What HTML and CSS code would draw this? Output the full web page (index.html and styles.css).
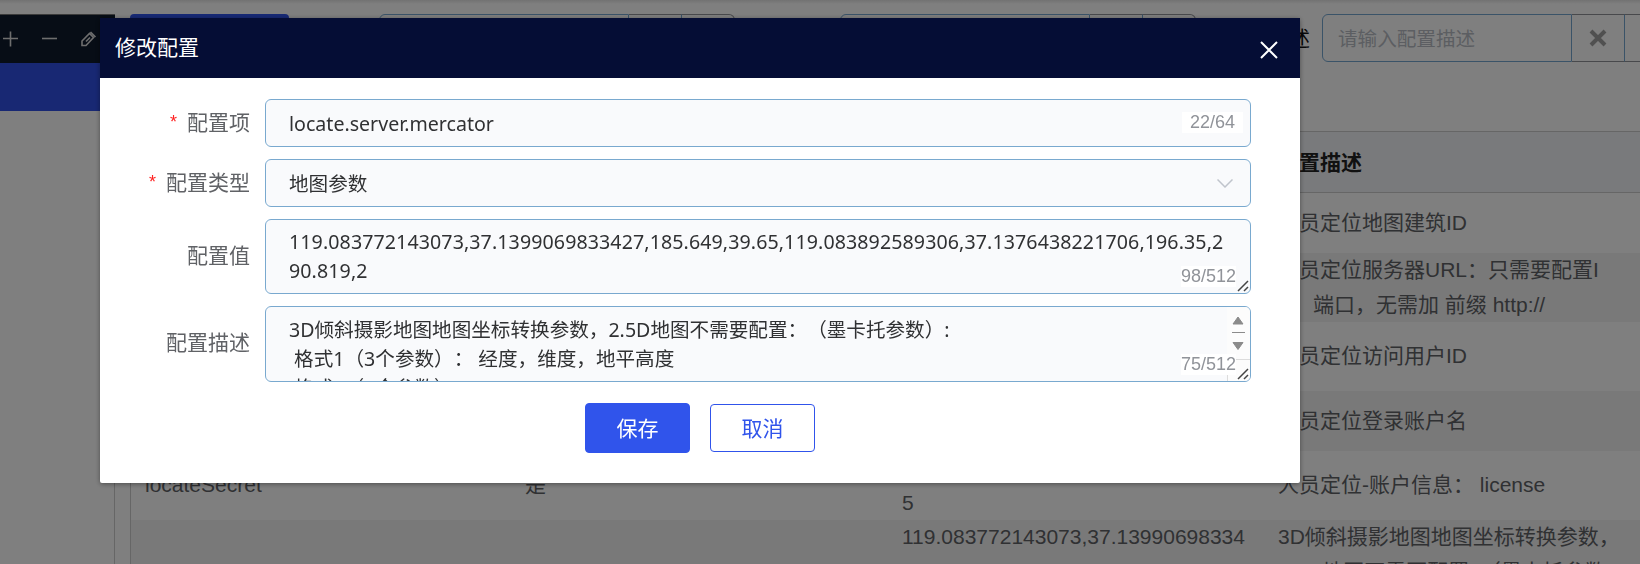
FILE: index.html
```html
<!DOCTYPE html>
<html lang="zh-CN">
  <head>
    <meta charset="UTF-8" />
    <meta name="viewport" content="width=device-width, initial-scale=1.0" />
    <title>修改配置</title>
    <link rel="stylesheet" href="styles.css">
  </head>
  <body>
    <div class="page">
      <!-- Sidebar -->
      <aside class="sidebar">
        <div class="sidebar-tools">
          <svg width="16" height="16" viewBox="0 0 16 16"><path d="M7.5 0.5V15.5M0 7.5H15" /></svg>
          <svg width="16" height="16" viewBox="0 0 16 16"><path d="M0 7.5H15" /></svg>
          <svg width="16" height="16" viewBox="0 0 16 16"><path d="M1 14.5V10L8.5 2.5L12.5 6.5L5 14.5ZM5 10.5L9 6.5M9.5 1L14.5 6" /></svg>
        </div>
        <div class="sidebar-active"></div>
      </aside>

      <main class="content">
        <!-- Search bar -->
        <div class="search">
          <button class="search-btn"></button>
          <div class="search-item first">
            <label>配置项</label>
            <div class="search-input"></div>
            <div class="search-clear"></div>
            <div class="search-more"></div>
          </div>
          <div class="search-item">
            <label>配置值</label>
            <div class="search-input"></div>
            <div class="search-clear"></div>
            <div class="search-more"></div>
          </div>
          <div class="search-item">
            <label>配置描述</label>
            <div class="search-input">请输入配置描述</div>
            <div class="search-clear">
              <svg width="18" height="18" viewBox="0 0 18 18"><path d="M2 2L16 16M16 2L2 16" /></svg>
            </div>
            <div class="search-more"></div>
          </div>
        </div>

        <!-- Config table -->
        <table class="config-table">
          <thead>
            <tr><th>配置项</th><th>是否启用</th><th>配置值</th><th>配置描述</th></tr>
          </thead>
          <tbody>
            <tr><td></td><td></td><td></td><td>人员定位地图建筑ID</td></tr>
            <tr class="tall"><td></td><td></td><td></td><td>人员定位服务器URL：只需要配置I<br>P、端口，无需加 前缀 http://</td></tr>
            <tr class="tall"><td></td><td></td><td></td><td>人员定位访问用户ID</td></tr>
            <tr><td></td><td></td><td></td><td>人员定位登录账户名</td></tr>
            <tr class="tall"><td>locateSecret</td><td>是</td><td><br>5</td><td>人员定位-账户信息： license</td></tr>
            <tr class="tall"><td></td><td></td><td>119.083772143073,37.13990698334<br>&nbsp;</td><td>3D倾斜摄影地图地图坐标转换参数，<br>2.5D地图不需要配置：（墨卡托参数</td></tr>
          </tbody>
        </table>
      </main>
    </div>

    <div class="mask"></div>

    <!-- Edit dialog -->
    <div class="dialog">
      <div class="dialog-header">
        <span>修改配置</span>
        <svg width="18" height="18" viewBox="0 0 18 18"><path d="M1 1L17 17M17 1L1 17" /></svg>
      </div>
      <div class="dialog-body">
        <div class="form-item">
          <label class="required">配置项</label>
          <div class="field">
            <span>locate.server.mercator</span>
            <span class="count">22/64</span>
          </div>
        </div>
        <div class="form-item">
          <label class="required">配置类型</label>
          <div class="field">
            <span class="selected">地图参数</span>
            <svg class="arrow" width="16" height="9" viewBox="0 0 16 9"><path d="M0.5 0.5L8 8L15.5 0.5" /></svg>
          </div>
        </div>
        <div class="form-item area-item">
          <label>配置值</label>
          <div class="field area value">119.083772143073,37.1399069833427,185.649,39.65,119.083892589306,37.1376438221706,196.35,2<br>90.819,2
            <span class="area-count">98/512</span>
            <svg class="resizer" width="12" height="12" viewBox="0 0 12 12"><path d="M1 11L11 1M7 11L11 7" /></svg>
          </div>
        </div>
        <div class="form-item area-item">
          <label>配置描述</label>
          <div class="field area desc">3D倾斜摄影地图地图坐标转换参数，2.5D地图不需要配置：（墨卡托参数）:<br>&nbsp;格式1（3个参数）：&nbsp;经度，维度，地平高度<br>&nbsp;格式2（8个参数）：
            <div class="scrollbar">
              <svg width="24" height="52" viewBox="0 0 24 52">
                <path class="thumb" d="M6 17L11 10L16 17ZM6 35.5L11 42.5L16 35.5Z" />
                <path class="line" d="M5 25.5H18" />
              </svg>
              <div class="corner"></div>
            </div>
            <span class="area-count">75/512</span>
            <svg class="resizer" width="12" height="12" viewBox="0 0 12 12"><path d="M1 11L11 1M7 11L11 7" /></svg>
          </div>
        </div>
        <div class="buttons">
          <button class="save">保存</button>
          <button class="cancel">取消</button>
        </div>
      </div>
    </div>
  </body>
</html>
```

FILE: styles.css
```css
* {
  box-sizing: border-box;
}

body {
  margin: 0;
  height: 564px;
  overflow: hidden;
  background: #fff;
  font-family: "Liberation Sans", "Noto Sans CJK SC", sans-serif;
  font-size: 21px;
  color: #606266;
}

svg {
  fill: none;
  stroke: currentColor;
}

button {
  font-family: inherit;
  font-size: 21px;
  border-radius: 4px;
}

.page {
  display: flex;
  width: 1700px;
  height: 564px;
  padding-top: 14px;
  overflow: hidden;
  background: linear-gradient(#e4e4e4, #fff 4px);
}

/* sidebar */
.sidebar {
  width: 115px;
  height: 570px;
  flex: none;
  border-right: 1px solid #ccc;
}

.sidebar-tools {
  display: flex;
  gap: 23px;
  align-items: center;
  width: 115px;
  height: 49px;
  padding-left: 3px;
  border-top: 1px solid #777;
  background: #0e1a2c;
  color: #ddd;
}

.sidebar-tools svg {
  stroke-width: 1.6;
}

.sidebar-active {
  width: 115px;
  height: 48px;
  background: #3050e6;
}

.content {
  flex: none;
  width: 1570px;
  margin-left: 15px;
}

/* search bar */
.search {
  display: flex;
  height: 48px;
  margin-bottom: 69px;
}

.search-btn {
  width: 159px;
  border: none;
  background: #3054eb;
}

.search-item {
  display: flex;
  align-items: center;
  flex: none;
  margin-left: 30px;
  color: #111;
}

.search-item.first {
  margin-left: 15px;
}

.search-item label {
  margin-top: -2px;
  padding-right: 12px;
}

.search-input {
  width: 250px;
  height: 48px;
  padding-left: 15px;
  border: 1px solid #75a7d0;
  border-radius: 6px 0 0 6px;
  font-size: 19.6px;
  line-height: 48px;
  color: #b8bcc4;
}

.search-clear,
.search-more {
  display: flex;
  align-items: center;
  justify-content: center;
  width: 53px;
  height: 48px;
  border: 1px solid #909399;
  border-left: none;
  color: #a0a0a0;
}

.search-clear {
  border-right-color: #75a7d0;
}

.search-clear svg {
  stroke-width: 4;
}

.search-more {
  border-radius: 0 6px 6px 0;
}

/* table */
.config-table {
  width: 1511px;
  table-layout: fixed;
  border-collapse: separate;
  border-spacing: 0;
  border-top: 1px solid #ccc;
  border-left: 1px solid #ccc;
}

.config-table th {
  width: 377px;
  height: 61px;
  padding: 0 14px 3px;
  border-bottom: 1px solid #ccc;
  background: #f3f5f9;
  color: #222;
  text-align: left;
}

.config-table th:first-child {
  width: 380px;
}

.config-table th:nth-child(3) {
  width: 376px;
}

.config-table td {
  height: 60px;
  padding: 0 0 0 14px;
  line-height: 34.5px;
  white-space: nowrap;
}

.config-table .tall td {
  height: 69px;
}

.config-table tr:nth-child(even) td {
  background: #f3f3f3;
}

.mask {
  position: fixed;
  inset: 0;
  background: rgba(0, 0, 0, 0.5);
}

/* dialog */
.dialog {
  position: fixed;
  top: 18px;
  left: 100px;
  width: 1200px;
  height: 465px;
  border-radius: 2px;
  background: #fff;
  box-shadow: 0 1px 5px rgba(0, 0, 0, 0.4);
}

.dialog-header {
  display: flex;
  align-items: center;
  justify-content: space-between;
  height: 60px;
  padding: 0 22px 0 15px;
  background: #050d35;
  color: #fff;
}

.dialog-header span {
  margin-top: -5px;
}

.dialog-header svg {
  margin-top: 4px;
  stroke-width: 2;
}

.dialog-body {
  display: flex;
  flex-direction: column;
  gap: 12px;
  padding: 21px 49px 0 15px;
}

.form-item {
  display: flex;
  align-items: center;
}

.form-item label {
  width: 150px;
  padding: 0 15px 5px 0;
  text-align: right;
}

.area-item label {
  padding-bottom: 6px;
}

.form-item .required::before {
  content: "*";
  margin-right: 10px;
  font-size: 18px;
  vertical-align: 2px;
  color: #f22;
}

.field {
  position: relative;
  display: flex;
  align-items: center;
  justify-content: space-between;
  width: 986px;
  height: 48px;
  padding: 0 17px 0 23px;
  border: 1px solid #79a9cf;
  border-radius: 6px;
  background: #f9fafc;
  font-family: "Noto Sans", "Noto Sans CJK SC", sans-serif;
  font-size: 19.6px;
  color: #303133;
}

.selected {
  margin-top: -2px;
}

.count,
.area-count {
  font-family: "Liberation Sans", sans-serif;
  font-size: 18px;
  line-height: 21px;
  background: #fff;
  color: #909399;
}

.count {
  margin: -2px -10px 0 0;
  padding: 0 8px;
}

.arrow {
  color: #c0c4cc;
  stroke-width: 1.5;
}

.area {
  display: block;
  padding-top: 7px;
  overflow: hidden;
  line-height: 29px;
  white-space: nowrap;
}

.value {
  height: 75px;
  letter-spacing: 0.1px;
}

.desc {
  height: 76px;
  padding-top: 8px;
  text-spacing-trim: space-all;
}

.area-count {
  position: absolute;
  right: 14px;
  bottom: 6px;
  letter-spacing: 0;
}

.resizer {
  position: absolute;
  right: 1px;
  bottom: 1px;
  color: #444;
  stroke-width: 1.5;
}

/* narrow scrollbar at the right of the textarea */
.scrollbar {
  position: absolute;
  top: 0;
  right: 0;
  width: 23px;
  height: 74px;
  background: #fcfcfc;
}

.scrollbar svg {
  display: block;
}

.scrollbar .thumb {
  fill: #8b8b8b;
  stroke: #8b8b8b;
  stroke-linejoin: round;
}

.scrollbar .line {
  stroke: #8b8b8b;
}

.corner {
  height: 22px;
  border-top: 1px solid #dcdcdc;
  border-left: 1px solid #dcdcdc;
}

.buttons {
  display: flex;
  align-items: center;
  gap: 20px;
  margin: 9px 0 0 470px;
}

.save,
.cancel {
  width: 105px;
  height: 50px;
  padding: 0 0 2px;
  border: 1px solid #3054eb;
  background: #3054eb;
  color: #fff;
}

.cancel {
  height: 48px;
  background: #fff;
  color: #3054eb;
}
```
